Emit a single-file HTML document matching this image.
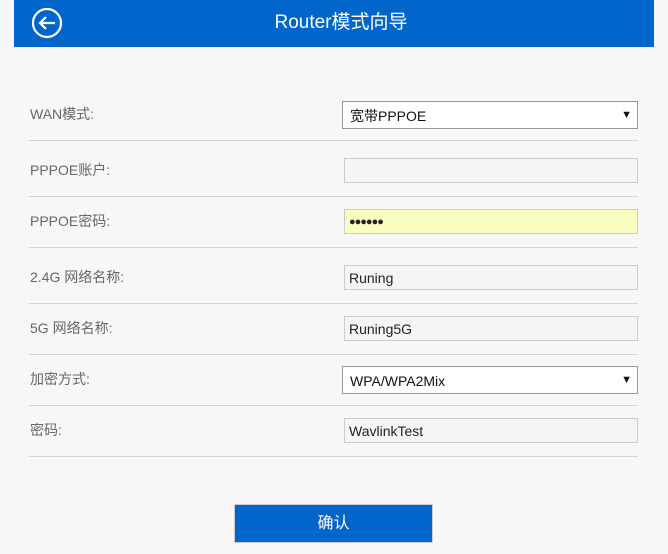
<!DOCTYPE html>
<html><head><meta charset="utf-8"><style>
*{margin:0;padding:0;box-sizing:border-box}
body{width:668px;height:554px;background:#f7f7f7;font-family:"Liberation Sans","Noto Sans CJK SC",sans-serif;position:relative;overflow:hidden}
.hdr{position:absolute;left:14px;top:0;width:640px;height:47px;background:#0066cc;color:#fff;font-size:19px;text-align:center;line-height:46px;padding-left:14px}
.lbl{position:absolute;left:30px;font-size:14px;color:#666}
.ln{position:absolute;left:29px;width:609px;height:1px;background:#d4d4d4}
.in{position:absolute;left:344px;width:294px;height:25px;border:1px solid #ccc;background:#f5f5f5;font-size:14px;color:#222;padding-left:4px;line-height:24px}
.sel{position:absolute;left:342px;width:296px;height:28px;border:1px solid #999;background:#fff;font-size:14px;color:#111;padding-left:7px;line-height:28px}
.sel:after{content:"▼";position:absolute;right:5px;top:0;font-size:11px;line-height:26px}
.btn{position:absolute;left:234px;top:504px;width:199px;height:39px;background:#0066cc;border:1px solid #ccc;color:#fff;font-size:16px;text-align:center;line-height:37px}
</style></head><body>
<div class="hdr">Router模式向导</div>
<svg style="position:absolute;left:31px;top:7px" width="32" height="32" viewBox="0 0 32 32"><circle cx="16" cy="16" r="14" fill="none" stroke="#fff" stroke-width="2.2"/><path d="M24 16H9M15 10l-6 6 6 6" fill="none" stroke="#fff" stroke-width="2.2"/></svg>
<div class="lbl" style="top:104px">WAN模式:</div>
<div class="sel" style="top:101px">宽带PPPOE</div>
<div class="ln" style="top:140px"></div>
<div class="lbl" style="top:160px">PPPOE账户:</div>
<div class="in" style="top:158px"></div>
<div class="ln" style="top:196px"></div>
<div class="lbl" style="top:211px">PPPOE密码:</div>
<div class="in" style="top:209px;background:#fafdc0;font-size:11px;letter-spacing:-1px">●●●●●●</div>
<div class="ln" style="top:247px"></div>
<div class="lbl" style="top:267px">2.4G 网络名称:</div>
<div class="in" style="top:265px">Runing</div>
<div class="ln" style="top:303px"></div>
<div class="lbl" style="top:318px">5G 网络名称:</div>
<div class="in" style="top:316px">Runing5G</div>
<div class="ln" style="top:354px"></div>
<div class="lbl" style="top:369px">加密方式:</div>
<div class="sel" style="top:366px">WPA/WPA2Mix</div>
<div class="ln" style="top:405px"></div>
<div class="lbl" style="top:420px">密码:</div>
<div class="in" style="top:418px">WavlinkTest</div>
<div class="ln" style="top:456px"></div>
<div class="btn">确认</div>
</body></html>
